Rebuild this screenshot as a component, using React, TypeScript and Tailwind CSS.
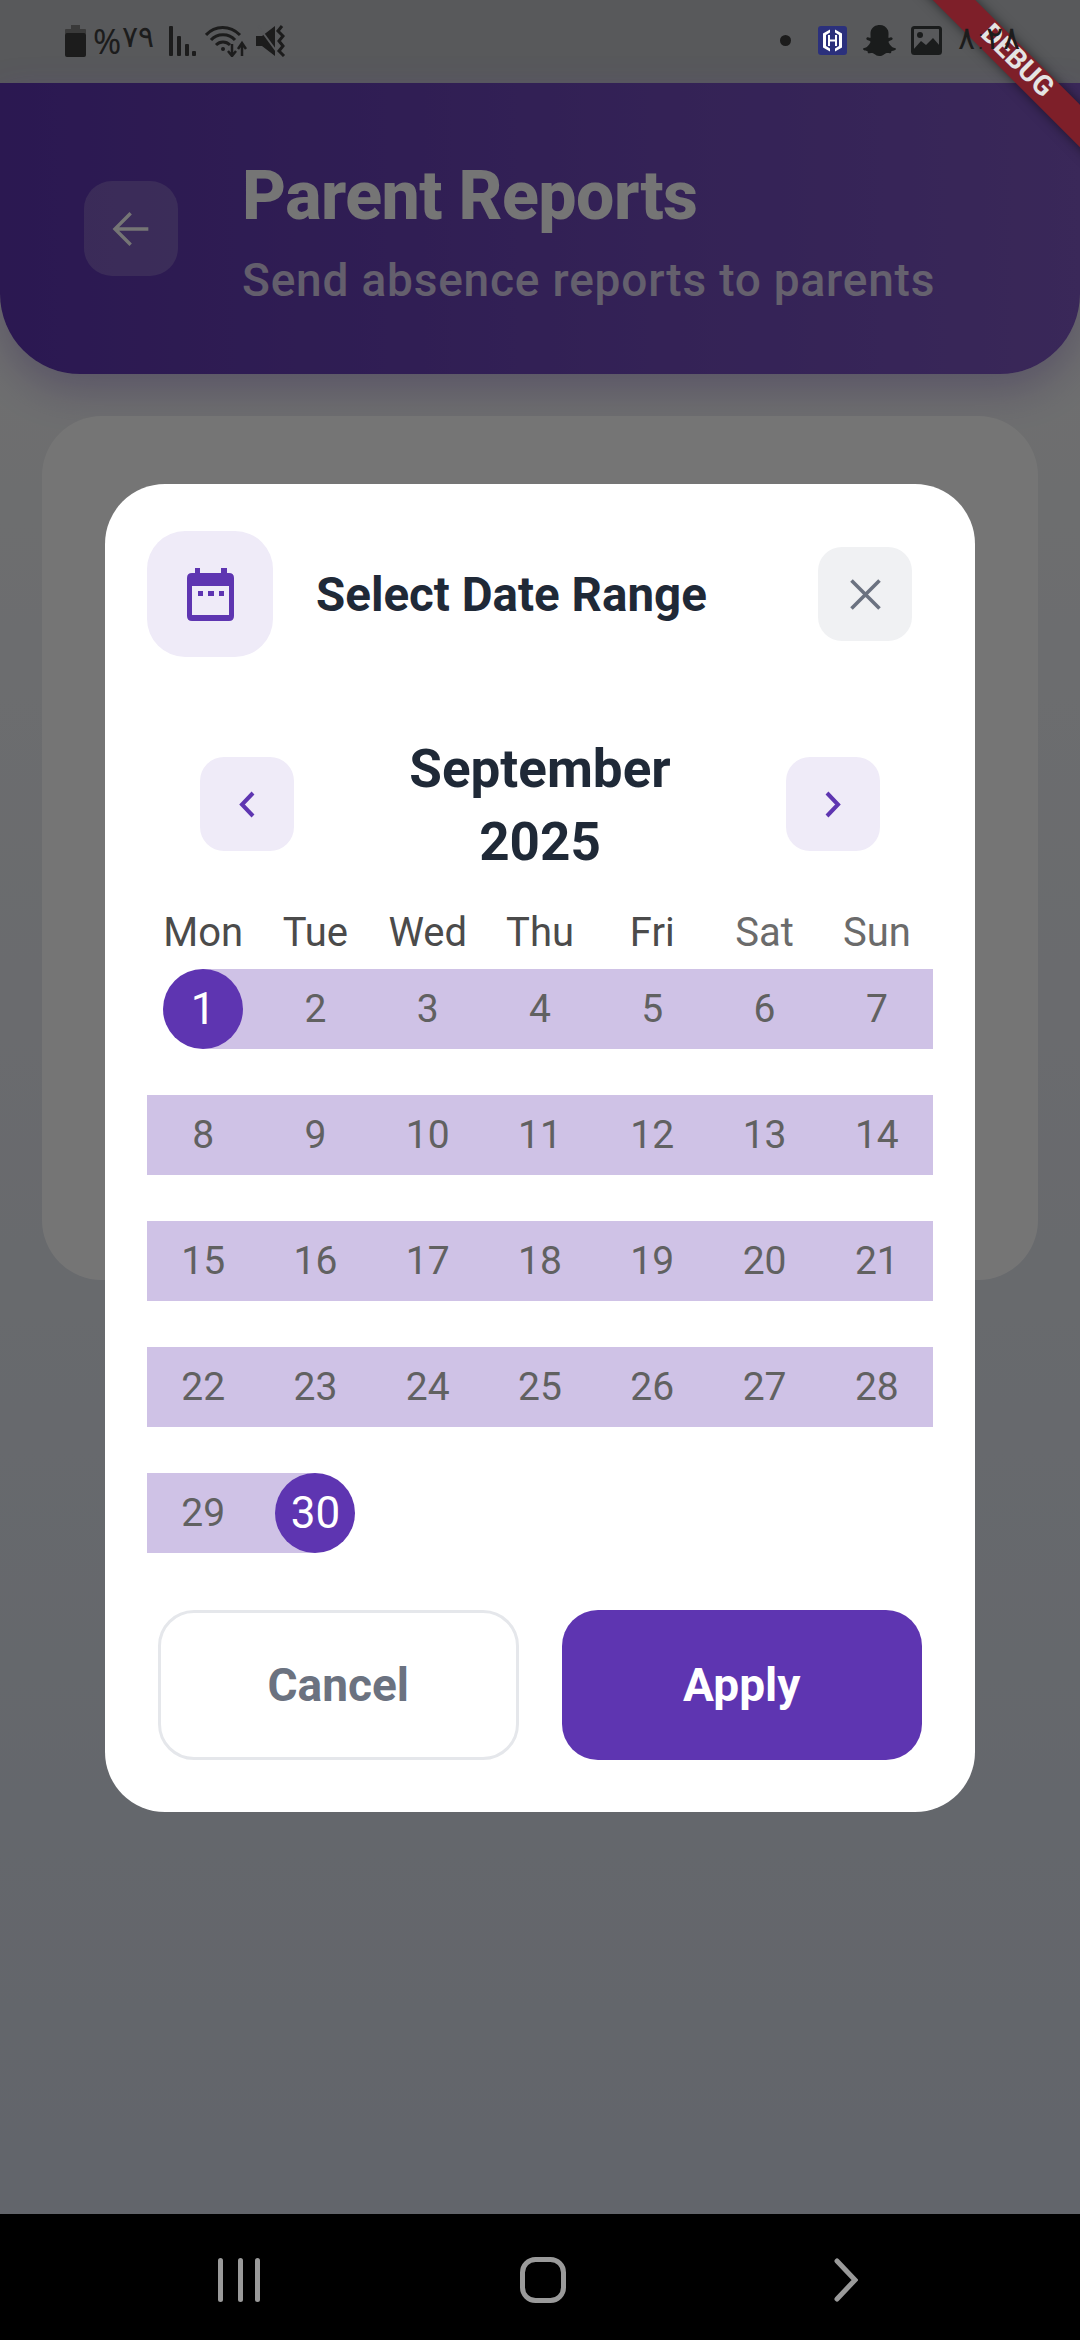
import { FaSnapchatGhost } from "react-icons/fa";

const font = { fontFamily: "Roboto, 'DejaVu Sans', sans-serif" };

const WEEKDAYS = ["Mon", "Tue", "Wed", "Thu", "Fri", "Sat", "Sun"];
const DAYS = Array.from({ length: 30 }, (_, i) => i + 1);

function StatusBar() {
  return (
    <div className="h-[83px] shrink-0 bg-[#58595b] flex items-center pl-[65px] pb-[2px] text-[#1c1c1c]">
      {/* Battery */}
      <svg width="21" height="32" viewBox="0 0 21 32" fill="#1c1c1c">
        <rect x="6" y="0" width="9" height="5" fill="#3a3a3a" />
        <rect x="0" y="4" width="21" height="5" rx="1" fill="#3a3a3a" />
        <rect x="0" y="8" width="21" height="24" rx="2" />
      </svg>
      <span className="ml-[7px] text-[34px] leading-none" style={{ fontFamily: "'Noto Sans', sans-serif" }}>%</span>
      <span className="ml-[1px] text-[30px] leading-none -translate-y-[4px] font-extralight" style={{ fontFamily: "'DejaVu Sans', sans-serif" }}>٧٩</span>
      {/* Signal */}
      <svg className="ml-[15px]" width="27" height="30" viewBox="0 0 27 30" fill="#1c1c1c">
        <rect x="0" y="0" width="4" height="30" rx="1" />
        <rect x="8" y="10" width="4" height="20" rx="1" />
        <rect x="16" y="18" width="4" height="12" rx="1" />
        <rect x="23" y="25" width="4" height="5" rx="1" />
      </svg>
      {/* Wifi */}
      <svg className="ml-[9px]" width="42" height="32" viewBox="0 0 42 32" fill="none" stroke="#1c1c1c" strokeWidth="3">
        <path d="M1 10 C 10 0, 25 0, 35 10" />
        <path d="M6 15 C 12 8, 24 8, 30 15" />
        <path d="M11 20 C 15 16, 21 16, 25 20" />
        <circle cx="18" cy="24" r="2" fill="#1c1c1c" stroke="none" />
        <path d="M27 19 V30 M23 26 L27 31 L31 26" strokeWidth="2.5" />
        <path d="M37 31 V19 M33 24 L37 18 L41 24" strokeWidth="2.5" />
      </svg>
      {/* Muted */}
      <svg className="ml-[9px]" width="31" height="32" viewBox="0 0 31 32" fill="#1c1c1c">
        <path d="M0 11 H6 L19 1 V31 L6 21 H0 Z" />
        <path d="M2 1 L21 27" stroke="#58595b" strokeWidth="2" />
        <path d="M26 1 L22 6 L27 11 L23 16 L27 21 L23 26 L28 31" fill="none" stroke="#1c1c1c" strokeWidth="3" />
      </svg>

      <span className="ml-[493px] w-[11px] h-[11px] rounded-full bg-[#1c1c1c]" />
      {/* App badge */}
      <svg className="ml-[27px]" width="29" height="29" viewBox="0 0 29 29">
        <rect width="29" height="29" rx="3" fill="#2b307c" />
        <path d="M12 3.5 L5 7.5 V21.5 L12 25.5 V22.5 L8 20 V9 L12 6.5 Z M17 3.5 L24 7.5 V21.5 L17 25.5 V22.5 L21 20 V9 L17 6.5 Z" fill="#fff" />
        <path d="M11 9 V20 M18 9 V20 M11 14.5 H18" stroke="#fff" strokeWidth="2" fill="none" />
      </svg>
      <FaSnapchatGhost className="ml-[16px] w-[33px] h-[33px] text-[#1a1c1c]" />
      {/* Gallery */}
      <svg className="ml-[15px]" width="31" height="29" viewBox="0 0 31 29">
        <rect x="1.5" y="1.5" width="28" height="26" rx="2" fill="none" stroke="#1a1c1c" strokeWidth="3" />
        <circle cx="9" cy="9" r="3" fill="#1a1c1c" />
        <path d="M2 24 L10 15 L15 19 L22 12 L29 20 V28 H2 Z" fill="#1a1c1c" />
      </svg>
      <span className="relative z-20 ml-[16px] text-[32px] leading-none -translate-y-[3px] font-extralight" style={{ fontFamily: "'DejaVu Sans', sans-serif" }}>
        ٨:٢٨
      </span>
    </div>
  );
}

function ParentReportsPage() {
  return (
    <>
      <div className="h-[291px] rounded-b-[80px] bg-gradient-to-r from-[#5e35b1] to-[#7e57c2] shadow-[0_16px_40px_rgba(94,53,177,0.3)] flex items-center pl-[84px]">
        <div className="w-[94px] h-[95px] rounded-[28px] bg-white/20 flex items-center justify-center">
          <svg width="52" height="52" viewBox="0 0 24 24" fill="white">
            <path d="M20 11.2H6.5l5.9-5.9L11.3 4.2 3.5 12l7.8 7.8 1.1-1.1-5.9-5.9H20z" />
          </svg>
        </div>
        <div className="ml-[64px] pt-[8px] flex flex-col">
          <div className="text-[68px] leading-[75px] font-extrabold text-white tracking-[-0.5px]">Parent Reports</div>
          <div className="mt-[20px] text-[46px] leading-[52px] tracking-[0.8px] font-medium text-white/75">Send absence reports to parents</div>
        </div>
      </div>
      <div className="mx-[42px] mt-[42px] h-[864px] rounded-[60px] bg-white" />
    </>
  );
}

function DayCell({ day }: { day: number }) {
  if (day === 1 || day === 30) {
    return (
      <div
        className={
          day === 1
            ? "h-[80px] flex items-center justify-center bg-[linear-gradient(to_right,transparent_50%,#cfc2e6_50%)]"
            : "h-[80px] flex items-center justify-center bg-[linear-gradient(to_right,#cfc2e6_50%,transparent_50%)]"
        }
      >
        <div className="w-[80px] h-[80px] rounded-full bg-[#5e35b1] text-white flex items-center justify-center text-[44px] font-normal">
          {day}
        </div>
      </div>
    );
  }
  return <div className="h-[80px] bg-[#cfc2e6] flex items-center justify-center text-[39px] font-normal text-[#616161]">{day}</div>;
}

function DateRangeDialog() {
  return (
    <div className="absolute left-[105px] top-[401px] w-[870px] h-[1328px] rounded-[60px] bg-white pt-[47px] px-[42px] flex flex-col">
      {/* Title row */}
      <div className="flex items-center">
        <div className="w-[126px] h-[126px] rounded-[38px] bg-[#efebf8] flex items-center justify-center">
          <svg width="47" height="53" viewBox="0 0 47 53" fill="#5e35b1">
            <rect x="8" y="0" width="5" height="8" />
            <rect x="34" y="0" width="6" height="8" />
            <path fillRule="evenodd" d="M5 5 H42 Q47 5 47 10 V48 Q47 53 42 53 H5 Q0 53 0 48 V10 Q0 5 5 5 Z M5 18 V47 H42 V18 Z" />
            <rect x="11" y="23" width="5" height="5" />
            <rect x="21" y="23" width="6" height="5" />
            <rect x="32" y="23" width="5" height="5" />
          </svg>
        </div>
        <div className="ml-[43px] flex-1 pt-[4px] text-[47.5px] font-bold text-[#1f2937]">Select Date Range</div>
        <button className="mr-[21px] w-[94px] h-[94px] rounded-[24px] bg-[#f0f1f3] flex items-center justify-center">
          <svg width="31" height="31" viewBox="0 0 31 31" stroke="#6b7280" strokeWidth="3.6" fill="none">
            <path d="M1.5 1.5 L29.5 29.5 M29.5 1.5 L1.5 29.5" />
          </svg>
        </button>
      </div>

      {/* Month switcher */}
      <div className="mt-[74px] mx-[53px] flex items-center">
        <button className="w-[94px] h-[94px] rounded-[24px] bg-[#efebf8] flex items-center justify-center">
          <svg width="16" height="27" viewBox="0 0 16 27" stroke="#5e35b1" strokeWidth="4" fill="none">
            <path d="M14 2 L3 13.5 L14 25" />
          </svg>
        </button>
        <div className="flex-1 pt-[2px] -mb-[2px] text-center text-[53px] leading-[73px] font-bold text-[#1f2937]">
          September
          <br />
          2025
        </div>
        <button className="w-[94px] h-[94px] rounded-[24px] bg-[#efebf8] flex items-center justify-center">
          <svg width="16" height="27" viewBox="0 0 16 27" stroke="#5e35b1" strokeWidth="4" fill="none">
            <path d="M2 2 L13 13.5 L2 25" />
          </svg>
        </button>
      </div>

      {/* Weekdays */}
      <div className="mt-[32px] grid grid-cols-7">
        {WEEKDAYS.map((d, i) => (
          <div key={d} className={i > 4 ? "text-center text-[40px] leading-[47px] text-[#6b6b6b]" : "text-center text-[40px] leading-[47px] text-[#4b4b4b]"}>
            {d}
          </div>
        ))}
      </div>

      {/* Days */}
      <div className="mt-[13px] grid grid-cols-7 gap-y-[46px]">
        {DAYS.map((d) => (
          <DayCell key={d} day={d} />
        ))}
      </div>

      {/* Actions */}
      <div className="mt-[57px] mx-[11px] grid grid-cols-2 gap-[43px]">
        <button className="h-[150px] rounded-[36px] border-[3px] border-[#e5e7eb] bg-white text-[46px] font-bold text-[#6b7280]">Cancel</button>
        <button className="h-[150px] rounded-[36px] bg-[#5e35b1] text-[46px] font-bold text-white">Apply</button>
      </div>
    </div>
  );
}

function NavBar() {
  return (
    <div className="h-[126px] shrink-0 bg-black flex items-center pl-[218px] pt-[6px]">
      <svg width="44" height="44" viewBox="0 0 44 44" fill="#9a9a9a">
        <rect x="0" y="0" width="5" height="44" rx="2.5" />
        <rect x="20" y="0" width="5" height="44" rx="2.5" />
        <rect x="37" y="0" width="5" height="44" rx="2.5" />
      </svg>
      <svg className="ml-[258px]" width="46" height="46" viewBox="0 0 46 46" fill="none" stroke="#9a9a9a" strokeWidth="5">
        <rect x="2.5" y="2.5" width="41" height="41" rx="13" />
      </svg>
      <svg className="ml-[268px]" width="24" height="44" viewBox="0 0 24 44" fill="none" stroke="#9a9a9a" strokeWidth="5" strokeLinecap="round">
        <path d="M3 3 L21 22 L3 41" />
      </svg>
    </div>
  );
}

export default function App() {
  return (
    <div className="relative w-[1080px] h-[2340px] overflow-hidden flex flex-col" style={font}>
      <StatusBar />
      <div className="relative flex-1 bg-gradient-to-b from-[#f4f4f4] to-[#d5dce9]">
        <ParentReportsPage />
        {/* Barrier */}
        <div className="absolute inset-0 bg-black/54" />
        <DateRangeDialog />
      </div>
      <NavBar />
      {/* Debug banner */}
      <div className="absolute z-10 left-[866px] top-[47px] w-[300px] h-[30px] rotate-45 bg-[#7e1f29] shadow-[0_0_12px_rgba(0,0,0,0.5)] flex items-center justify-center pb-[4px] text-[28px] leading-none font-bold text-[#e4e4e4]">
        DEBUG
      </div>
    </div>
  );
}
